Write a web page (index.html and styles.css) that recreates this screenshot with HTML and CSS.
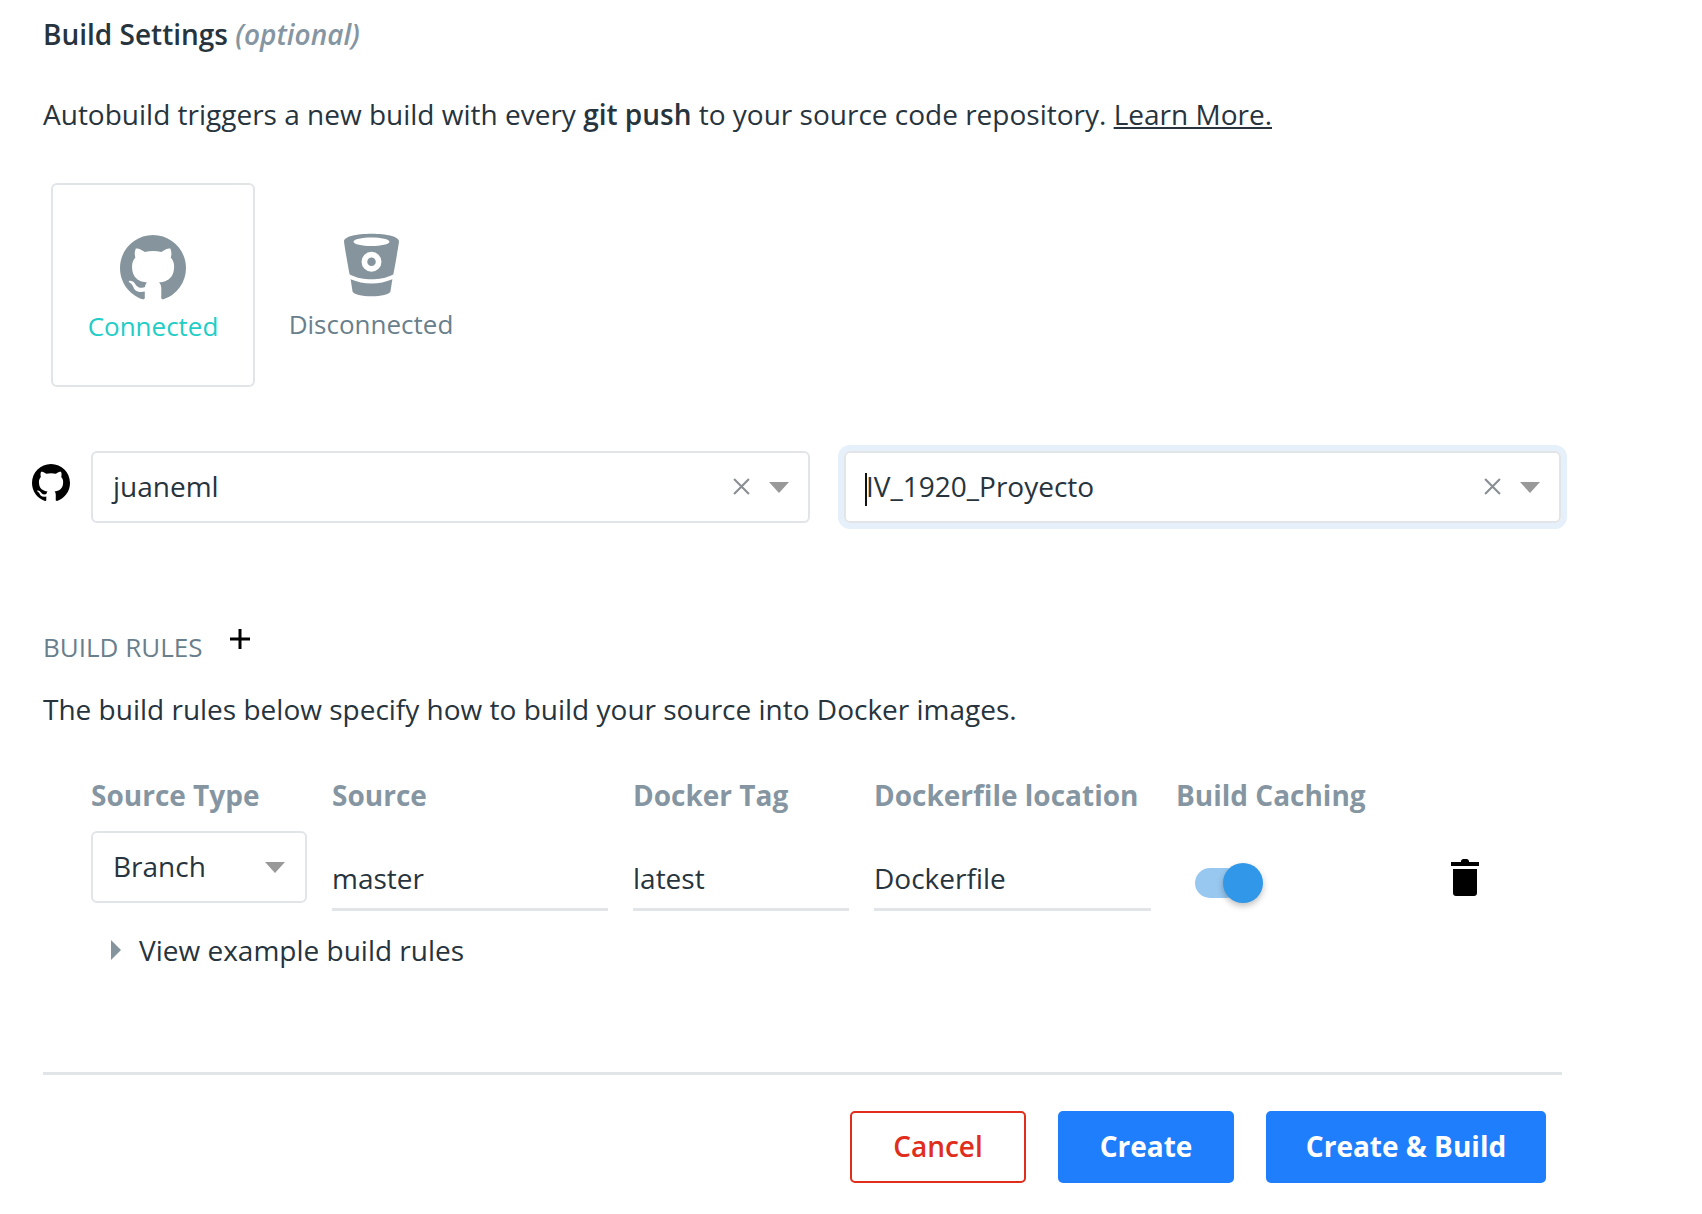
FILE: index.html
```html
<!DOCTYPE html>
<html lang="en">
<head>
    <meta charset="UTF-8">
    <title>Build Settings</title>
    <link rel="stylesheet" href="styles.css">
</head>
<body>
    <div id="page">
        <!-- title -->
        <h2 class="title">Build Settings <em>(optional)</em></h2>
        <p class="intro">Autobuild triggers a new build with every <b>git push</b> to your source code repository. <a href="#">Learn More.</a></p>

        <!-- providers -->
        <div class="providers">
            <div class="provider active">
                <svg class="provider-icon" viewBox="0 0 16 16"><path d="M8 0C3.58 0 0 3.58 0 8c0 3.54 2.29 6.53 5.47 7.59.4.07.55-.17.55-.38 0-.19-.01-.82-.01-1.49-2.01.37-2.53-.49-2.69-.94-.09-.23-.48-.94-.82-1.13-.28-.15-.68-.52-.01-.53.63-.01 1.08.58 1.23.82.72 1.21 1.87.87 2.33.66.07-.52.28-.87.51-1.07-1.78-.2-3.64-.89-3.64-3.95 0-.87.31-1.59.82-2.15-.08-.2-.36-1.02.08-2.12 0 0 .67-.21 2.2.82.64-.18 1.32-.27 2-.27.68 0 1.36.09 2 .27 1.53-1.04 2.2-.82 2.2-.82.44 1.1.16 1.92.08 2.12.51.56.82 1.27.82 2.15 0 3.07-1.87 3.75-3.65 3.95.29.25.54.73.54 1.48 0 1.07-.01 1.93-.01 2.2 0 .21.15.46.55.38A8.013 8.013 0 0016 8c0-4.42-3.58-8-8-8z"/></svg>
                <span>Connected</span>
            </div>
            <div class="provider off">
                <svg class="bucket-icon" viewBox="0 0 58 66"><path fill-rule="evenodd" d="M29 0C13 0 0 3 0 8c0 2 5 31 6 35 8 4 15 5 23 5s15-1 23-5c1-4 6-33 6-35 0-5-13-8-29-8zM29 4c10 0 19 2 19 4.500S39 13 29 13 10 11 10 8.500 19 4 29 4zM29 19a10.500 10.500 0 1 1 0 21 10.500 10.500 0 0 1 0-21zM29 25a4.500 4.500 0 1 0 0 9 4.500 4.500 0 0 0 0-9z"/><path d="M7 48c7 3 14 4.500 22 4.500S44 51 51 48l-2 13c-1 3-10 5-20 5S10 64 9 61z"/></svg>
                <span>Disconnected</span>
            </div>
        </div>

        <!-- repository -->
        <div class="repo-row">
            <svg class="repo-icon" viewBox="0 0 16 16"><path d="M8 0C3.58 0 0 3.58 0 8c0 3.54 2.29 6.53 5.47 7.59.4.07.55-.17.55-.38 0-.19-.01-.82-.01-1.49-2.01.37-2.53-.49-2.69-.94-.09-.23-.48-.94-.82-1.13-.28-.15-.68-.52-.01-.53.63-.01 1.08.58 1.23.82.72 1.21 1.87.87 2.33.66.07-.52.28-.87.51-1.07-1.78-.2-3.64-.89-3.64-3.95 0-.87.31-1.59.82-2.15-.08-.2-.36-1.02.08-2.12 0 0 .67-.21 2.2.82.64-.18 1.32-.27 2-.27.68 0 1.36.09 2 .27 1.53-1.04 2.2-.82 2.2-.82.44 1.1.16 1.92.08 2.12.51.56.82 1.27.82 2.15 0 3.07-1.87 3.75-3.65 3.95.29.25.54.73.54 1.48 0 1.07-.01 1.93-.01 2.2 0 .21.15.46.55.38A8.013 8.013 0 0016 8c0-4.42-3.58-8-8-8z"/></svg>
            <div class="select">
                <span class="select-value">juaneml</span>
                <svg class="clear" viewBox="0 0 16 16"><path d="M1 1l14 14M15 1L1 15"/></svg>
                <i class="caret"></i>
            </div>
            <div class="select focused">
                <span class="select-value"><i class="cursor"></i>IV_1920_Proyecto</span>
                <svg class="clear" viewBox="0 0 16 16"><path d="M1 1l14 14M15 1L1 15"/></svg>
                <i class="caret"></i>
            </div>
        </div>

        <!-- build rules -->
        <div class="rules-head">
            <span class="rules-title">BUILD RULES</span>
            <svg class="plus" viewBox="0 0 20 20"><path d="M10 0v20M0 10h20"/></svg>
        </div>
        <p class="rules-text">The build rules below specify how to build your source into Docker images.</p>

        <div class="rules">
            <div class="th">Source Type</div>
            <div class="th">Source</div>
            <div class="th">Docker Tag</div>
            <div class="th">Dockerfile location</div>
            <div class="th">Build Caching</div>
            <div class="th"></div>

            <div class="select small">
                <span class="select-value">Branch</span>
                <i class="caret"></i>
            </div>
            <div class="field">master</div>
            <div class="field">latest</div>
            <div class="field">Dockerfile</div>
            <div class="toggle"><i class="knob"></i></div>
            <svg class="trash" viewBox="0 0 28 37"><path d="M10 2.500C10 1 11 0 12.500 0h3C17 0 18 1 18 2.500V3h10v4H0V3h10zM2 10h24v24c0 1.700-1.300 3-3 3H5c-1.700 0-3-1.300-3-3z"/></svg>
        </div>

        <div class="examples"><i class="arrow"></i>View example build rules</div>

        <div class="actions">
            <button class="btn cancel">Cancel</button>
            <button class="btn create">Create</button>
            <button class="btn build">Create &amp; Build</button>
        </div>
    </div>
</body>
</html>
```

FILE: styles.css
```css
*{
    margin: 0;
    padding: 0;
    box-sizing: border-box;
}
body{
    background-color: #fff;
    font-family: "Open Sans", "Noto Sans", sans-serif;
    font-size: 28px;
    color: #27343d;
}
#page{
    width: 1702px;
    height: 1214px;
    overflow: hidden;
    padding: 12px 0 0 43px;
}
.title{
    font-size: 28px;
    font-weight: 600;
    line-height: 44px;
}
.title em{
    color: #8596a2;
}
.intro{
    margin-top: 36px;
    line-height: 44px;
}
.intro a{
    color: #27343d;
}
.intro b{
    font-weight: 600;
}
.providers{
    display: flex;
    margin: 47px 0 0 8px;
}
.provider{
    width: 204px;
    height: 204px;
    display: flex;
    flex-direction: column;
    align-items: center;
    padding-top: 50px;
    font-size: 26px;
    color: #6a7f8c;
}
.provider.active{
    border: 2px solid #e1e5e8;
    border-radius: 6px;
    color: #22cdc6;
}
.provider.off{
    margin-left: 14px;
}
.provider span{
    line-height: 36px;
    margin-top: 9px;
}
.provider.active span{
    margin-top: 7px;
}
.provider-icon{
    width: 66px;
    height: 66px;
    fill: #86959d;
}
.bucket-icon{
    width: 55px;
    height: 64px;
    fill: #86959d;
}
.repo-row{
    display: flex;
    align-items: center;
    margin: 64px 0 0 -12px;
}
.repo-icon{
    width: 38px;
    height: 38px;
    margin: -8px 21px 0 1px;
    flex-shrink: 0;
}
.select{
    width: 719px;
    height: 72px;
    border: 2px solid #e1e5e8;
    border-radius: 6px;
    display: flex;
    align-items: center;
    padding: 0 20px;
    margin-right: 34px;
}
.select.focused{
    width: 717px;
    box-shadow: 0 0 0 6px #e6f0fb;
    margin-right: 0;
}
.select-value{
    flex: 1;
    margin-top: -2px;
}
.cursor{
    display: inline-block;
    width: 2px;
    height: 33px;
    background-color: #111;
    vertical-align: middle;
    margin-left: -1px;
    margin-right: -1px;
}
.clear{
    width: 17px;
    height: 17px;
    fill: none;
    stroke: #8a8f93;
    stroke-width: 2;
    margin: -2px 19px 0 0;
}
.caret{
    width: 0;
    height: 0;
    border-left: 10px solid transparent;
    border-right: 10px solid transparent;
    border-top: 11px solid #999;
    margin-right: -1px;
}
.rules-head{
    display: flex;
    align-items: flex-start;
    margin-top: 106px;
}
.rules-title{
    font-size: 26px;
    line-height: 36px;
    color: #6a7f8c;
}
.plus{
    width: 20px;
    height: 20px;
    fill: none;
    stroke: #000;
    stroke-width: 3;
    margin: 0 0 0 28px;
}
.rules-text{
    margin-top: 22px;
    line-height: 44px;
}
.rules{
    display: grid;
    grid-template-columns: 216px 276px 216px 277px 250px 30px;
    column-gap: 25px;
    margin: 42px 0 0 48px;
    align-items: end;
    width: 1400px;
}
.th{
    font-weight: 700;
    color: #8596a2;
    line-height: 44px;
    height: 44px;
}
.select.small{
    width: 216px;
    margin: 14px 0 8px;
}
.small .caret{
    margin-right: 0;
}
.field{
    height: 62px;
    line-height: 46px;
    border-bottom: 3px solid #e1e5e8;
    padding-top: 6px;
}
.toggle{
    width: 46px;
    height: 30px;
    margin: 0 0 13px 19px;
    background-color: #98c8f0;
    border-radius: 15px;
    position: relative;
}
.knob{
    position: absolute;
    top: -5px;
    right: -22px;
    width: 40px;
    height: 40px;
    border-radius: 50%;
    background-color: #3197e8;
    box-shadow: 0 3px 6px rgba(0,0,0,.25);
}
.trash{
    width: 28px;
    height: 37px;
    margin: 0 0 15px 0;
    fill: #000;
}
.examples{
    display: flex;
    align-items: center;
    margin: 17px 0 0 68px;
    line-height: 44px;
}
.arrow{
    width: 0;
    height: 0;
    border-top: 10px solid transparent;
    border-bottom: 10px solid transparent;
    border-left: 10px solid #86959d;
    margin-right: 18px;
}
.actions{
    display: flex;
    justify-content: flex-end;
    gap: 32px;
    width: 1519px;
    margin-top: 100px;
    padding: 36px 16px 0 0;
    border-top: 3px solid #e1e5e8;
}
.btn{
    height: 72px;
    padding-bottom: 2px;
    border-radius: 5px;
    border: none;
    font-family: inherit;
    font-size: 28px;
    font-weight: 700;
    background-color: #1f7efb;
    color: #fff;
}
.cancel{
    width: 176px;
    border: 2px solid #e02d1c;
    background-color: #fff;
    color: #e02d1c;
    font-weight: 600;
}
.create{
    width: 176px;
}
.build{
    width: 280px;
}
```
